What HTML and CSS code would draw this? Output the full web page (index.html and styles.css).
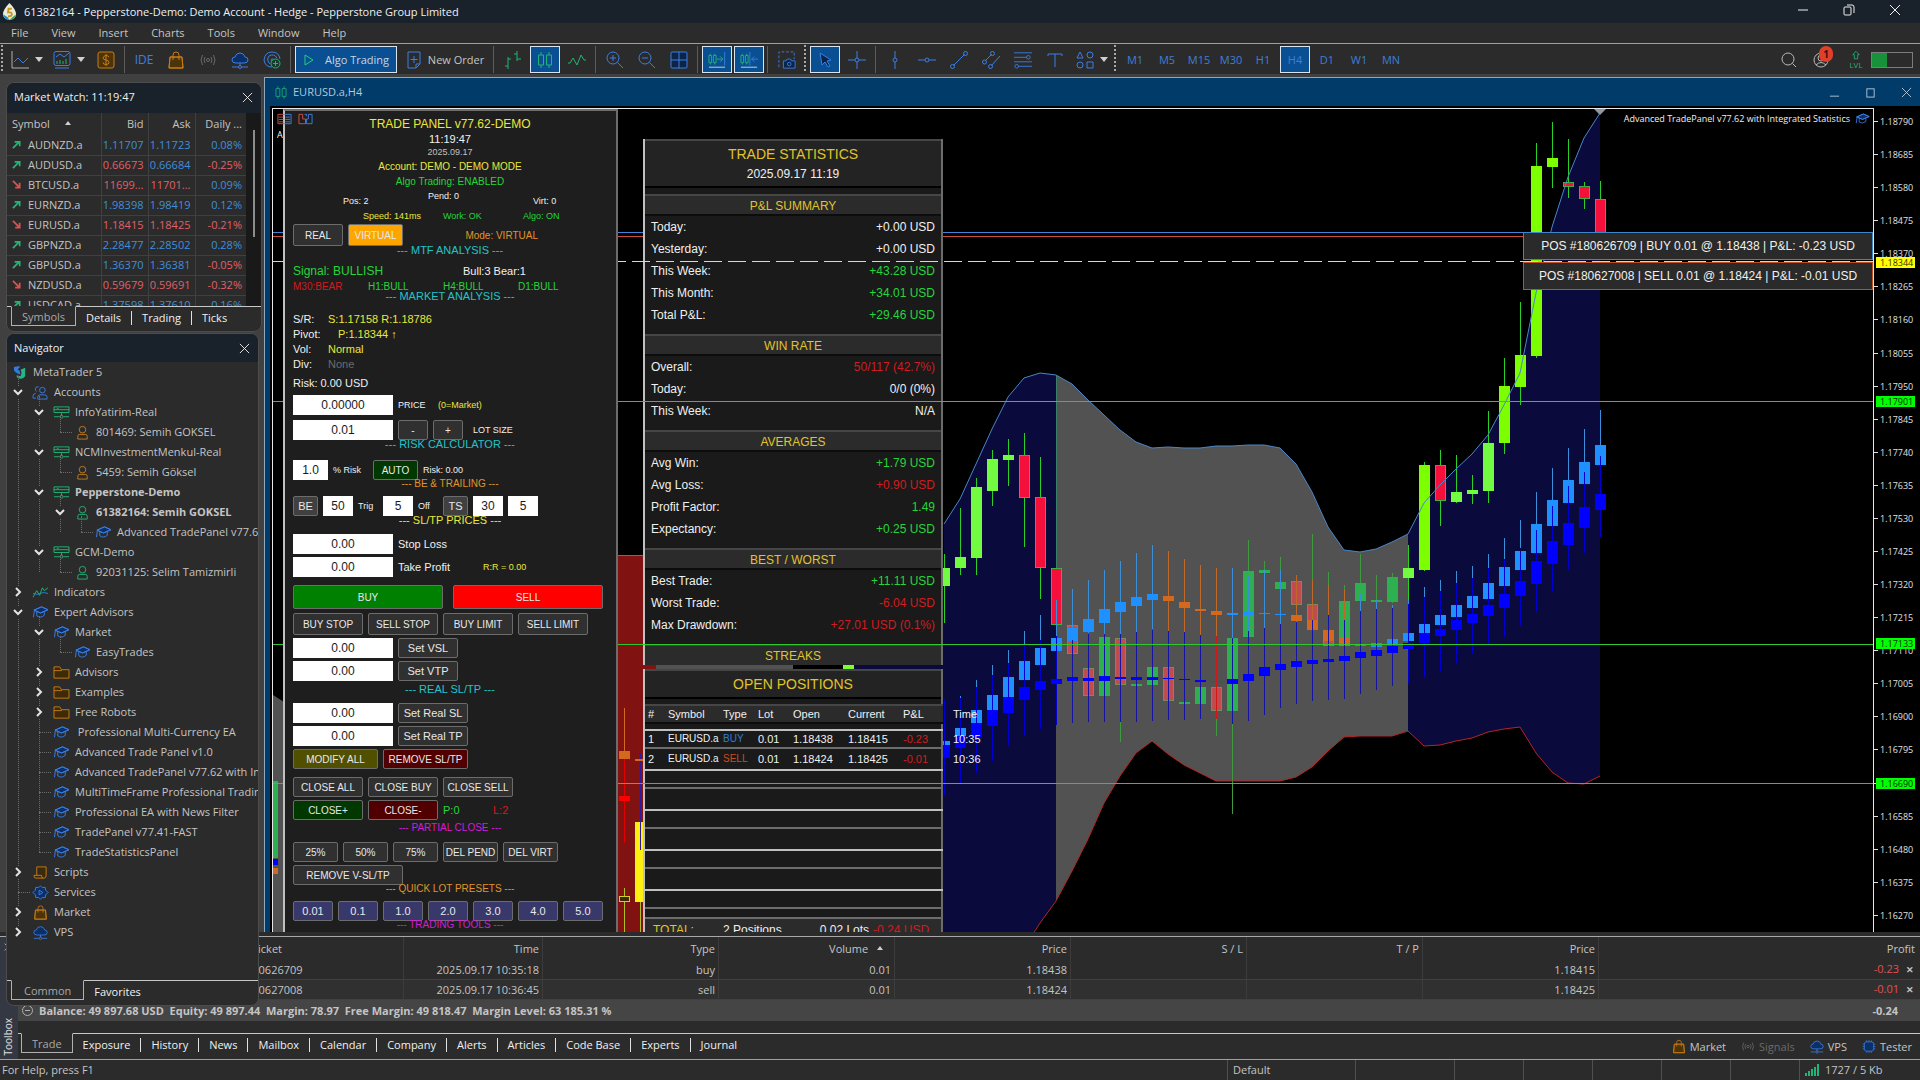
FILE: index.html
```html
<!DOCTYPE html>
<html lang="en">
<head>
  <meta charset="UTF-8" />
  <title>61382164 - Pepperstone-Demo: Demo Account - Hedge - Pepperstone Group Limited</title>
  <link rel="stylesheet" href="styles.css">
</head>
<body>
  <!-- Icon set -->
  <svg class="sprite" aria-hidden="true">
    <symbol id="i-cap" viewBox="0 0 18 16"><path d="M2 5.5L10 2l7 3-8 3.500z" fill="#0b2f66"/><path d="M2 5.500L10 2l7 3-8 3.500zM5 7v4.500q4 3 8-.5V7M2.500 5.500L1.500 13" /></symbol>
    <symbol id="i-folder" viewBox="0 0 18 16"><path d="M1 2h6l2 3h8v9H1zM1 6h8V5" fill="#3d2a08"/></symbol>
    <symbol id="i-user" viewBox="0 0 18 16"><circle cx="9" cy="5" r="3.500"/><path d="M4 15v-3q0-2 2-2h6q2 0 2 2v3z"/></symbol>
    <symbol id="i-users" viewBox="0 0 18 16"><circle cx="11" cy="5.500" r="3"/><path d="M6 15v-2q0-2.500 2.500-2.500h5q2.500 0 2.500 2.500v2zM7 2q-3-1-3.500 2 0 2 1.500 3M4 9q-3 0-3 3v2h3"/></symbol>
    <symbol id="i-server" viewBox="0 0 18 16"><path d="M1 2h16v6H1zM1 5h16M4 3.500h2M9 8v3M1 12.500h6M11 12.500h6"/><circle cx="9" cy="12.500" r="1.500"/></symbol>
    <symbol id="i-wave" viewBox="0 0 18 16"><path d="M1 13l4-7 3 5 3-8 2 3 4-3"/><path d="M1 9l5 1 6-2 5 1" stroke="#2f7de0"/></symbol>
    <symbol id="i-script" viewBox="0 0 18 16"><path d="M5 2h10v9q0 3-2 3H4q-2 0-2-3h8q0 3 2 3M5 2v9" fill="#3d2a08"/></symbol>
    <symbol id="i-gear" viewBox="0 0 18 16"><path d="M9 .8l2 2 3-.3.500 3L17 8l-2.500 2.500-.5 3-3-.3-2 2-2-2-3 .3-.5-3L1 8l2.500-2.500.5-3 3 .3z" fill="#0b2f66"/><path d="M7.500 5.500v5l4-2.500z"/></symbol>
    <symbol id="i-bag" viewBox="0 0 18 18"><path d="M3 6h12l1 11H2z" fill="#4d3408"/><path d="M3 6h12l1 11H2zM6 9V4q0-3 3-3t3 3v5"/></symbol>
    <symbol id="i-cloud" viewBox="0 0 18 18"><path d="M5 12q-4 0-4-3t3-3q1-4 5-4t5 4q3 0 3 3t-4 3z" fill="#0b2f66"/><path d="M9 12v3M1 16h6M11 16h6"/><circle cx="9" cy="16" r="1.500"/></symbol>
    <symbol id="i-signal" viewBox="0 0 18 18"><circle cx="9" cy="9" r="1.500"/><path d="M6 6q-2 3 0 6M12 6q2 3 0 6M3.500 4q-3 5 0 10M14.500 4q3 5 0 10"/></symbol>
    <symbol id="i-chip" viewBox="0 0 18 18"><rect x="3" y="3" width="12" height="12" rx="3" fill="#0b2f66"/><path d="M6 3V1M9 3V1M12 3V1M6 17v-2M9 17v-2M12 17v-2M1 6h2M1 9h2M1 12h2M15 6h2M15 9h2M15 12h2"/></symbol>
    <symbol id="i-line" viewBox="0 0 18 18"><path d="M1 0v17h17" stroke="#b0b0b0"/><path d="M3 11l4-4 5 5 5-5"/></symbol>
    <symbol id="i-template" viewBox="0 0 18 18"><rect x="1" y="0.500" width="16" height="14" rx="2"/><path d="M2 17h14M3 6l4-3 4 3 5-4"/><path d="M4 13v-3M7 13V9M10 13v-3M13 13V8" stroke="#1fb574"/></symbol>
    <symbol id="i-dollar" viewBox="0 0 18 18"><rect x="1" y="1" width="16" height="16" rx="2" fill="#4d3408"/><path d="M12 6q-1-1.500-3-1.500T6 7q0 1.500 3 2t3 2.500q0 2-3 2t-3-2M9 3v12"/></symbol>
    <symbol id="i-radar" viewBox="0 0 18 18"><path d="M9 16q-7 0-8-7 1-8 8-8t8 7M7 13q-4-4-1-8 5-3 8 2M8 10q0-3 2-2"/><circle cx="12.500" cy="12.500" r="4.500" stroke="#1fb574" fill="#173a2c"/><path d="M12.500 10v5M10 12.500h5" stroke="#1fb574"/></symbol>
    <symbol id="i-order" viewBox="0 0 18 18"><path d="M3 1h12v12l-4 4H3zM11 17v-4h4M9 5v7M5.500 8.500h7"/></symbol>
    <symbol id="i-bars" viewBox="0 0 18 18"><path d="M4 6v12M1 15h3M4 8h3M13 0v10M10 3h3M13 8h4"/></symbol>
    <symbol id="i-candles" viewBox="0 0 18 18"><path d="M5 1v3M5 14v3M13 1v3M13 14v3M2.500 4h5v10h-5zM10.500 4h5v10h-5z"/></symbol>
    <symbol id="i-zig" viewBox="0 0 18 18"><path d="M0 12h2l3-5 4 7 4-10 3 5h2"/></symbol>
    <symbol id="i-zin" viewBox="0 0 18 18"><circle cx="7" cy="7" r="6"/><path d="M11.500 11.500L17 17M4 7h6M7 4v6"/></symbol>
    <symbol id="i-zout" viewBox="0 0 18 18"><circle cx="7" cy="7" r="6"/><path d="M11.500 11.500L17 17M4 7h6"/></symbol>
    <symbol id="i-grid" viewBox="0 0 18 18"><rect x="1" y="1" width="16" height="16" rx="1" fill="#0b2447"/><path d="M9 1v16M1 9h16"/></symbol>
    <symbol id="i-shiftr" viewBox="0 0 20 18"><path d="M1 4h3v8H1zM6 4h3v8H6zM2.500 2v2M2.500 12v2M7.500 2v2M7.500 12v2M10 8h6M13.500 5l3 3-3 3" stroke="#1fb574"/><path d="M18.500 0v15"/><path d="M1 17h18" stroke="#c8dcf0"/></symbol>
    <symbol id="i-shiftl" viewBox="0 0 20 18"><path d="M1 4h3v8H1zM6 4h3v8H6zM2.500 2v2M2.500 12v2M7.500 2v2M7.500 12v2" stroke="#1fb574"/><path d="M11 0v15M13 8h7M16 5l-3 3 3 3"/><path d="M1 17h18" stroke="#c8dcf0"/></symbol>
    <symbol id="i-camera" viewBox="0 0 20 20"><path d="M1 18V1h17v8" stroke-dasharray="3 2"/><path d="M6 11h3l1-2h4l1 2h4v8H6z" fill="#0b2447"/><circle cx="12.500" cy="14.500" r="2"/></symbol>
    <symbol id="i-cursor" viewBox="0 0 18 18"><path d="M4 2l11 7-4 1 3 5-2 1-3-5-3 3z" fill="#0b2447"/></symbol>
    <symbol id="i-cross" viewBox="0 0 18 18"><path d="M9 0v7M9 11v7M0 9h7M11 9h7"/><circle cx="9" cy="9" r="2"/></symbol>
    <symbol id="i-vline" viewBox="0 0 18 18"><path d="M9 0v7M9 11v7"/><circle cx="9" cy="9" r="2"/></symbol>
    <symbol id="i-hline" viewBox="0 0 18 18"><path d="M0 9h7M11 9h7"/><circle cx="9" cy="9" r="2"/></symbol>
    <symbol id="i-trend" viewBox="0 0 18 18"><path d="M3.500 14.500l11-11"/><circle cx="2.500" cy="15.500" r="2"/><circle cx="15.500" cy="2.500" r="2"/></symbol>
    <symbol id="i-channel" viewBox="0 0 18 18"><path d="M3.500 9.500l6-6M9.500 14.500L18 5"/><circle cx="2.500" cy="11" r="2"/><circle cx="10.500" cy="2.500" r="2"/><circle cx="8.500" cy="15.500" r="2"/></symbol>
    <symbol id="i-fib" viewBox="0 0 20 18"><path d="M0 1h20M0 6h14M0 11h20M5 16h15"/><circle cx="16" cy="6" r="2"/><circle cx="3" cy="16" r="2"/></symbol>
    <symbol id="i-text" viewBox="0 0 18 18"><path d="M2 5V3h14v2M9 3v13"/></symbol>
    <symbol id="i-shapes" viewBox="0 0 18 18"><path d="M4 1L1 7h6zM11 11h6v6h-6z"/><circle cx="14" cy="4" r="3"/><circle cx="4" cy="14" r="3"/></symbol>
    <symbol id="i-search" viewBox="0 0 18 18"><circle cx="8" cy="8" r="6"/><path d="M12.500 12.500L16 16"/></symbol>
    <symbol id="i-x" viewBox="0 0 12 12"><path d="M1 1l10 10M11 1L1 11"/></symbol>
    <symbol id="i-down" viewBox="0 0 12 12"><path d="M2 4l4 4 4-4"/></symbol>
    <symbol id="i-right" viewBox="0 0 12 12"><path d="M4 2l4 4-4 4"/></symbol>
    <symbol id="i-ne" viewBox="0 0 10 10"><path d="M1 9l7-7M3 2h5.500v5"/></symbol>
    <symbol id="i-se" viewBox="0 0 10 10"><path d="M1 1l7 7M8.500 3v5.500h-5"/></symbol>
    <symbol id="i-mt" viewBox="0 0 16 16"><path d="M1 2l6-1v2q-4 2 0 3l1 4Q1 8 1 5z" fill="#2f7de0" stroke="none"/><path d="M8 5l5-2v9q-4 5-9 1v-2l4 1q2-4 0-7z" fill="#25b58a" stroke="none"/></symbol>
  </svg>

  <div class="app">
    <header class="titlebar">
      <svg class="logo" viewBox="0 0 16 20"><path d="M8 1q7 7 7 12t-7 6q-7-1-7-6T8 1z" fill="#e8ecd8"/><path d="M1 13q1 6 7 6l-2-3z" fill="#2f8fc0"/><path d="M15 13q-1 6-7 6l3-3z" fill="#3fa35a"/><path d="M10.500 7H7l-.5 4q4-.5 4 2t-4 2" fill="none" stroke="#c9961c" stroke-width="2"/></svg>
      <h1>61382164 - Pepperstone-Demo: Demo Account - Hedge - Pepperstone Group Limited</h1>
      <div class="win-btns">
        <button aria-label="Minimize"><svg viewBox="0 0 12 12"><path d="M1 6h10"/></svg></button>
        <button aria-label="Restore"><svg viewBox="0 0 12 12"><rect x="1" y="3" width="7" height="8" rx="1"/><path d="M4 1h5q2 0 2 2v6"/></svg></button>
        <button aria-label="Close"><svg><use href="#i-x"/></svg></button>
      </div>
    </header>

    <nav class="menubar">
      <a href="#">File</a><a href="#">View</a><a href="#">Insert</a><a href="#">Charts</a><a href="#">Tools</a><a href="#">Window</a><a href="#">Help</a>
    </nav>

    <div class="toolbar">
      <span class="handle"></span>
      <button class="tool drop blue" aria-label="Chart type"><svg><use href="#i-line"/></svg><i class="tri"></i></button>
      <button class="tool drop blue" aria-label="Templates"><svg><use href="#i-template"/></svg><i class="tri"></i></button>
      <button class="tool orange" aria-label="Symbols"><svg><use href="#i-dollar"/></svg></button>
      <span class="sep"></span>
      <button class="tool blue ide">IDE</button>
      <button class="tool orange" aria-label="Market"><svg><use href="#i-bag"/></svg></button>
      <button class="tool grey" aria-label="Signals"><svg><use href="#i-signal"/></svg></button>
      <button class="tool blue" aria-label="VPS"><svg><use href="#i-cloud"/></svg></button>
      <button class="tool blue" aria-label="Copy signals"><svg><use href="#i-radar"/></svg></button>
      <span class="sep"></span>
      <button class="tool algo on"><svg class="play" viewBox="0 0 12 12"><path d="M2 1v10l8-5z"/></svg>Algo Trading</button>
      <button class="tool order blue"><svg><use href="#i-order"/></svg><span>New Order</span></button>
      <span class="sep"></span>
      <button class="tool green" aria-label="Bars"><svg><use href="#i-bars"/></svg></button>
      <button class="tool green on" aria-label="Candles"><svg><use href="#i-candles"/></svg></button>
      <button class="tool green" aria-label="Line"><svg><use href="#i-zig"/></svg></button>
      <span class="sep"></span>
      <button class="tool blue" aria-label="Zoom in"><svg><use href="#i-zin"/></svg></button>
      <button class="tool blue" aria-label="Zoom out"><svg><use href="#i-zout"/></svg></button>
      <button class="tool blue" aria-label="Tile windows"><svg><use href="#i-grid"/></svg></button>
      <span class="sep"></span>
      <button class="tool blue on" aria-label="Auto scroll"><svg><use href="#i-shiftr"/></svg></button>
      <button class="tool blue on" aria-label="Chart shift"><svg><use href="#i-shiftl"/></svg></button>
      <span class="sep"></span>
      <button class="tool blue" aria-label="Screenshot"><svg><use href="#i-camera"/></svg></button>
      <span class="handle"></span>
      <button class="tool blue on" aria-label="Cursor"><svg><use href="#i-cursor"/></svg></button>
      <button class="tool blue" aria-label="Crosshair"><svg><use href="#i-cross"/></svg></button>
      <span class="sep"></span>
      <button class="tool blue" aria-label="Vertical line"><svg><use href="#i-vline"/></svg></button>
      <button class="tool blue" aria-label="Horizontal line"><svg><use href="#i-hline"/></svg></button>
      <button class="tool blue" aria-label="Trendline"><svg><use href="#i-trend"/></svg></button>
      <button class="tool blue" aria-label="Channel"><svg><use href="#i-channel"/></svg></button>
      <button class="tool blue" aria-label="Fibonacci"><svg><use href="#i-fib"/></svg></button>
      <button class="tool blue" aria-label="Text"><svg><use href="#i-text"/></svg></button>
      <button class="tool drop blue" aria-label="Objects"><svg><use href="#i-shapes"/></svg><i class="tri"></i></button>
      <span class="handle"></span>
      <button class="tool tf">M1</button><button class="tool tf">M5</button><button class="tool tf">M15</button><button class="tool tf">M30</button><button class="tool tf">H1</button><button class="tool tf on">H4</button><button class="tool tf">D1</button><button class="tool tf">W1</button><button class="tool tf">MN</button>
      <div class="tool-right">
        <button class="tool light" aria-label="Search"><svg><use href="#i-search"/></svg></button>
        <button class="tool light account" aria-label="Account"><svg viewBox="0 0 18 18"><circle cx="9" cy="9" r="7"/><circle cx="9" cy="7" r="3"/><path d="M4 14q5-5 10 0"/></svg><b class="badge">1</b></button>
        <span class="lvl"><svg viewBox="0 0 12 12"><path d="M6 1l4 4H8v5H4V5H2z"/></svg>LVL</span>
        <span class="meter"><i></i></span>
      </div>
    </div>

    <main class="workspace">
      <aside class="sidebar">
        <section class="panel watch">
          <h2>Market Watch: 11:19:47 <button aria-label="Close Market Watch"><svg><use href="#i-x"/></svg></button></h2>
          <div class="watch-body">
            <table>
              <thead><tr><th class="sym">Symbol <i class="up"></i></th><th>Bid</th><th>Ask</th><th class="day">Daily ...</th></tr></thead>
              <tbody id="watchRows"></tbody>
            </table>
            <div class="track"><i></i></div>
          </div>
          <div class="tabs"><a href="#" class="on">Symbols</a><a href="#">Details</a><a href="#">Trading</a><a href="#">Ticks</a></div>
        </section>

        <section class="panel navigator">
          <h2>Navigator <button aria-label="Close Navigator"><svg><use href="#i-x"/></svg></button></h2>
          <div class="tree">
            <div class="node root"><svg class="ico"><use href="#i-mt"/></svg>MetaTrader 5</div>
            <ul id="tree"></ul>
          </div>
          <div class="tabs"><a href="#" class="on">Common</a><a href="#">Favorites</a></div>
        </section>
      </aside>

      <section class="chart-win">
        <header class="chart-title">
          <svg class="green"><use href="#i-candles"/></svg>
          <h2>EURUSD.a,H4</h2>
          <div class="win-btns">
            <button aria-label="Minimize chart"><svg viewBox="0 0 12 12"><path d="M1 10h10"/></svg></button>
            <button aria-label="Maximize chart"><svg viewBox="0 0 12 12"><rect x="2" y="2" width="8" height="9"/></svg></button>
            <button aria-label="Close chart"><svg><use href="#i-x"/></svg></button>
          </div>
        </header>

        <div class="chart-body">
          <div class="plot">
            <svg id="chart" class="layer" viewBox="273 109 1600 823" preserveAspectRatio="none"></svg>
            <svg id="levels" class="layer levels" viewBox="273 109 1600 823" preserveAspectRatio="none"></svg>
            <div class="ea-name">Advanced TradePanel v77.62 with Integrated Statistics <svg class="blue"><use href="#i-cap"/></svg></div>
            <div class="corner">A</div>
            <div class="corner-icons">
              <svg viewBox="0 0 16 12"><path d="M8 1H1v10h7M2 4h5M2 6.500h5M2 9h5" stroke="#d0504a"/><path d="M8 1h7v10H8M9 4h5M9 6.500h5M9 9h5" stroke="#3d7fe0"/></svg>
              <svg viewBox="0 0 16 12"><path d="M1 1h4v5h3v5H1z" stroke="#d0504a"/><path d="M15 1h-4v5H9v5h6zM7 1h2v2" stroke="#3d7fe0"/></svg>
            </div>

            <div class="trade-panel">
              <div class="tp-title yellow">TRADE PANEL v77.62-DEMO</div>
              <div class="tp-time">11:19:47</div>
              <div class="tp-date">2025.09.17</div>
              <div class="tp-line yellow">Account: DEMO - DEMO MODE</div>
              <div class="tp-line lime">Algo Trading: ENABLED</div>
              <div class="row counts"><span class="w80">Pos: 2</span><span class="w100 raised">Pend: 0</span><span>Virt: 0</span></div>
              <div class="row speeds"><span class="w75 yellow">Speed: 141ms</span><span class="w75 lime">Work: OK</span><span class="lime">Algo: ON</span></div>
              <div class="row tall"><button class="w50">REAL</button><button class="w55 amber">VIRTUAL</button><span class="w130 orange-t">Mode: VIRTUAL</span></div>
              <div class="head h16 cyan">--- MTF ANALYSIS ---</div>
              <div class="row signal"><span class="w165 big lime">Signal: BULLISH</span><span>Bull:3 Bear:1</span></div>
              <div class="row frames"><span class="w70 red">M30:BEAR</span><span class="w70 lime">H1:BULL</span><span class="w70 lime">H4:BULL</span><span class="lime">D1:BULL</span></div>
              <div class="head h20 cyan">--- MARKET ANALYSIS ---</div>
              <div class="info"><span>S/R:</span><span class="yellow">S:1.17158 R:1.18786</span></div>
              <div class="info"><span>Pivot:</span><span class="yellow in">P:1.18344 ↑</span></div>
              <div class="info"><span>Vol:</span><span class="yellow">Normal</span></div>
              <div class="info"><span>Div:</span><span class="dim">None</span></div>
              <div class="info risk">Risk: 0.00 USD</div>
              <div class="row"><input id="price" class="w100" value="0.00000"><label for="price" class="w35 tiny">PRICE</label><span class="tiny yellow">(0=Market)</span></div>
              <div class="row gap5"><input id="lot" class="w100" value="0.01"><button class="w30">-</button><button class="w30">+</button><label for="lot" class="tiny lotl">LOT SIZE</label></div>
              <div class="head h20 cyan">--- RISK CALCULATOR ---</div>
              <div class="row"><input id="risk" class="w35" value="1.0"><label for="risk" class="w35 tiny">% Risk</label><button class="w45 auto">AUTO</button><span class="tiny">Risk: 0.00</span></div>
              <div class="head h16 orange-t small">--- BE &amp; TRAILING ---</div>
              <div class="row"><button class="w25 grey-b">BE</button><input id="trig" class="w30" value="50"><label for="trig" class="w20 tiny">Trig</label><input id="off" class="w30" value="5"><label for="off" class="w20 tiny">Off</label><button class="w25 grey-b">TS</button><input aria-label="Trailing start" class="w30" value="30"><input aria-label="Trailing step" class="w30" value="5"></div>
              <div class="head h18 yellow">--- SL/TP PRICES ---</div>
              <div class="row"><input id="sl" class="w100" value="0.00"><label for="sl">Stop Loss</label></div>
              <div class="row gap3"><input id="tp" class="w100" value="0.00"><label for="tp" class="w80">Take Profit</label><span class="tiny yellow">R:R = 0.00</span></div>
              <div class="row big-btns gap8"><button class="buy">BUY</button><button class="sell">SELL</button></div>
              <div class="row tall gap4"><button class="w70">BUY STOP</button><button class="w70">SELL STOP</button><button class="w70">BUY LIMIT</button><button class="w70">SELL LIMIT</button></div>
              <div class="row gap3"><input aria-label="Virtual SL" class="w100" value="0.00"><button class="w60 mixed">Set VSL</button></div>
              <div class="row gap3"><input aria-label="Virtual TP" class="w100" value="0.00"><button class="w60 mixed">Set VTP</button></div>
              <div class="head h22 cyan">--- REAL SL/TP ---</div>
              <div class="row"><input aria-label="Real SL" class="w100" value="0.00"><button class="w70 mixed">Set Real SL</button></div>
              <div class="row gap3"><input aria-label="Real TP" class="w100" value="0.00"><button class="w70 mixed">Set Real TP</button></div>
              <div class="row gap3"><button class="w85 olive">MODIFY ALL</button><button class="w85 maroon">REMOVE SL/TP</button></div>
              <div class="row gap8"><button class="w70">CLOSE ALL</button><button class="w70">CLOSE BUY</button><button class="w70">CLOSE SELL</button></div>
              <div class="row gap3"><button class="w70 auto">CLOSE+</button><button class="w70 maroon">CLOSE-</button><span class="w45 lime">P:0</span><span class="red">L:2</span></div>
              <div class="head h22 magenta small">--- PARTIAL CLOSE ---</div>
              <div class="row"><button class="w45">25%</button><button class="w45">50%</button><button class="w45">75%</button><button class="w55">DEL PEND</button><button class="w55">DEL VIRT</button></div>
              <div class="row gap3"><button class="w110">REMOVE V-SL/TP</button></div>
              <div class="head h16 orange-t small">--- QUICK LOT PRESETS ---</div>
              <div class="row lots"><button>0.01</button><button>0.1</button><button>1.0</button><button>2.0</button><button>3.0</button><button>4.0</button><button>5.0</button></div>
              <div class="head h16 magenta small">--- TRADING TOOLS ---</div>
            </div>

            <div class="stats">
              <div class="stat-box">
                <div class="stat-title">TRADE STATISTICS<small>2025.09.17 11:19</small></div>
                <h3>P&amp;L SUMMARY</h3>
                <dl>
                  <div><dt>Today:</dt><dd>+0.00 USD</dd></div>
                  <div><dt>Yesterday:</dt><dd>+0.00 USD</dd></div>
                  <div><dt>This Week:</dt><dd class="lime">+43.28 USD</dd></div>
                  <div><dt>This Month:</dt><dd class="lime">+34.01 USD</dd></div>
                  <div><dt>Total P&amp;L:</dt><dd class="lime">+29.46 USD</dd></div>
                </dl>
                <h3>WIN RATE</h3>
                <dl>
                  <div><dt>Overall:</dt><dd class="red">50/117 (42.7%)</dd></div>
                  <div><dt>Today:</dt><dd>0/0 (0%)</dd></div>
                  <div><dt>This Week:</dt><dd>N/A</dd></div>
                </dl>
                <h3>AVERAGES</h3>
                <dl>
                  <div><dt>Avg Win:</dt><dd class="lime">+1.79 USD</dd></div>
                  <div><dt>Avg Loss:</dt><dd class="red">+0.90 USD</dd></div>
                  <div><dt>Profit Factor:</dt><dd class="lime">1.49</dd></div>
                  <div><dt>Expectancy:</dt><dd class="lime">+0.25 USD</dd></div>
                </dl>
                <h3>BEST / WORST</h3>
                <dl>
                  <div><dt>Best Trade:</dt><dd class="lime">+11.11 USD</dd></div>
                  <div><dt>Worst Trade:</dt><dd class="red">-6.04 USD</dd></div>
                  <div><dt>Max Drawdown:</dt><dd class="red">+27.01 USD (0.1%)</dd></div>
                </dl>
                <h3 class="last">STREAKS</h3>
              </div>
              <div class="stat-box open">
                <div class="open-title">OPEN POSITIONS</div>
                <table>
                  <colgroup><col class="c23"><col class="c55"><col class="c35"><col class="c35"><col class="c55"><col class="c55"><col class="c40"><col class="c50"></colgroup>
                  <thead><tr><th>#</th><th>Symbol</th><th>Type</th><th>Lot</th><th>Open</th><th>Current</th><th>P&amp;L</th><th>Time</th></tr></thead>
                  <tbody>
                    <tr><td>1</td><td class="sm">EURUSD.a</td><td class="sm azure">BUY</td><td>0.01</td><td>1.18438</td><td>1.18415</td><td class="red">-0.23</td><td>10:35</td></tr>
                    <tr><td>2</td><td class="sm">EURUSD.a</td><td class="sm brick">SELL</td><td>0.01</td><td>1.18424</td><td>1.18425</td><td class="red">-0.01</td><td>10:36</td></tr>
                    <tr><td></td><td></td><td></td><td></td><td></td><td></td><td></td><td></td></tr>
                    <tr><td></td><td></td><td></td><td></td><td></td><td></td><td></td><td></td></tr>
                    <tr><td></td><td></td><td></td><td></td><td></td><td></td><td></td><td></td></tr>
                    <tr><td></td><td></td><td></td><td></td><td></td><td></td><td></td><td></td></tr>
                    <tr><td></td><td></td><td></td><td></td><td></td><td></td><td></td><td></td></tr>
                    <tr><td></td><td></td><td></td><td></td><td></td><td></td><td></td><td></td></tr>
                    <tr><td></td><td></td><td></td><td></td><td></td><td></td><td></td><td></td></tr>
                  </tbody>
                </table>
                <div class="open-total"><span class="gold">TOTAL:</span><span>2 Positions</span><span class="lots-sum">0.02 Lots</span><span class="red">-0.24 USD</span></div>
              </div>
            </div>

            <div class="pos-list">
              <div class="pos buy-pos">POS #180626709 | BUY 0.01 @ 1.18438 | P&amp;L: -0.23 USD</div>
              <div class="pos sell-pos">POS #180627008 | SELL 0.01 @ 1.18424 | P&amp;L: -0.01 USD</div>
            </div>
          </div>
          <div class="scale" id="scale"></div>
        </div>
      </section>

      <section class="toolbox">
        <div class="tb-side"><svg><use href="#i-x"/></svg><span>Toolbox</span></div>
        <div class="tb-main">
          <table>
            <colgroup><col class="t-a"><col class="t-b"><col class="t-c"><col class="t-d"><col class="t-d"><col class="t-d"><col class="t-d"><col class="t-d"><col class="t-d"><col></colgroup>
            <thead><tr><th></th><th class="l">Ticket</th><th>Time</th><th>Type</th><th class="vol">Volume <i class="up"></i></th><th>Price</th><th>S / L</th><th>T / P</th><th>Price</th><th class="pl">Profit</th></tr></thead>
            <tbody>
              <tr><td></td><td class="l">180626709</td><td>2025.09.17 10:35:18</td><td>buy</td><td>0.01</td><td>1.18438</td><td></td><td></td><td>1.18415</td><td class="pl"><span class="loss">-0.23</span><button aria-label="Close position">✕</button></td></tr>
              <tr class="alt"><td></td><td class="l">180627008</td><td>2025.09.17 10:36:45</td><td>sell</td><td>0.01</td><td>1.18424</td><td></td><td></td><td>1.18425</td><td class="pl"><span class="loss">-0.01</span><button aria-label="Close position">✕</button></td></tr>
            </tbody>
          </table>
          <div class="balance"><span class="minus"></span><b>Balance: 49 897.68 USD&nbsp; Equity: 49 897.44&nbsp; Margin: 78.97&nbsp; Free Margin: 49 818.47&nbsp; Margin Level: 63 185.31 %</b><b class="sum">-0.24</b></div>
          <div class="tb-tabs">
            <div class="tabs"><a href="#" class="on">Trade</a><a href="#">Exposure</a><a href="#">History</a><a href="#">News</a><a href="#">Mailbox</a><a href="#">Calendar</a><a href="#">Company</a><a href="#">Alerts</a><a href="#">Articles</a><a href="#">Code Base</a><a href="#">Experts</a><a href="#">Journal</a></div>
            <div class="links">
              <a href="#"><svg class="orange"><use href="#i-bag"/></svg>Market</a>
              <a href="#" class="off"><svg class="grey"><use href="#i-signal"/></svg>Signals</a>
              <a href="#"><svg class="blue"><use href="#i-cloud"/></svg>VPS</a>
              <a href="#"><svg class="blue"><use href="#i-chip"/></svg>Tester</a>
            </div>
          </div>
        </div>
      </section>
    </main>

    <footer class="status">
      <span class="help">For Help, press F1</span>
      <span class="s1">Default</span><span class="s2"></span><span class="s3"></span><span class="s3"></span><span class="s3"></span><span class="s3"></span><span class="s3"></span>
      <span class="net"><svg viewBox="0 0 14 12"><path d="M1 12V9M4 12V7M7 12V5M10 12V3M13 12V0"/></svg>1727 / 5 Kb</span>
    </footer>
  </div>
  <script src="script.js"></script>
</body>
</html>
```
FILE: styles.css
```css
* {
  box-sizing: border-box;
}
body {
  margin: 0;
  background: #404040;
  color: #c4c4c4;
  font-family: "Open Sans", "Noto Sans", sans-serif;
  font-size: 11px;
  line-height: 16px;
}
h1, h2, h3, dl, dd, ul {
  margin: 0;
  padding: 0;
  font-size: inherit;
  font-weight: normal;
}
a {
  color: inherit;
  text-decoration: none;
}
button, input {
  font: inherit;
  color: inherit;
  margin: 0;
  padding: 0;
  border: 0;
  background: none;
}
table {
  border-collapse: collapse;
  table-layout: fixed;
}
th {
  font-weight: normal;
}
svg {
  width: 18px;
  height: 18px;
  fill: none;
  stroke: currentColor;
  flex: none;
}
.sprite {
  position: absolute;
  width: 0;
  height: 0;
}

/* Shared colours */
.blue { color: #3b7ee6; }
.green { color: #1fb574; }
.orange { color: #c87c14; }
.grey { color: #6a6a6a; }
.light { color: #b8b8b8; }
.yellow { color: #e8e83c; }
.lime { color: #25d53a; }
.red { color: #d01c20; }
.cyan { color: #22c4c8; }
.magenta { color: #d41cd4; }
.orange-t { color: #e0942a; }
.gold { color: #e0c42a; }
.azure { color: #2a7fd0; }
.brick { color: #d04a20; }
.dim { color: #6c6c6c; }

.app {
  display: flex;
  flex-direction: column;
  height: 100vh;
}

/* Title and menu */
.titlebar {
  display: flex;
  align-items: center;
  height: 23px;
  padding: 0 2px;
  background: #19212a;
  color: #f0f0f0;
}
.logo {
  width: 15px;
  height: 19px;
  margin-right: 7px;
  stroke: none;
}
.win-btns {
  display: flex;
  margin-left: auto;
}
.win-btns button {
  width: 46px;
  height: 20px;
}
.win-btns svg {
  width: 12px;
  height: 12px;
}
.menubar {
  display: flex;
  gap: 23px;
  height: 20px;
  padding: 2px 11px;
  background: #2b2b2b;
}

/* Toolbar */
.toolbar {
  display: flex;
  gap: 2px;
  height: 31px;
  padding: 2px 7px 1px 1px;
  border-top: 1px solid #a0a0a0;
  background: #2b2b2b;
}
.tool {
  display: flex;
  align-items: center;
  justify-content: center;
  width: 30px;
  flex: none;
  border: 1px solid transparent;
}
.tool.on {
  background: #0a4f92;
  border-color: #d8e4f0;
}
.tool.drop {
  width: 40px;
  gap: 6px;
}
.handle {
  width: 2px;
  margin: -1px 2px 0 0;
  background: repeating-linear-gradient(#a8a8a8 0 2px, transparent 2px 4px);
}
.sep {
  width: 1px;
  margin: 0 2px 0 1px;
  background: #5c5c5c;
}
.tri {
  border: 4px solid transparent;
  border-top: 5px solid #d0d0d0;
  border-bottom: 0;
}
.up {
  display: inline-block;
  margin: 0 4px 3px 12px;
  border: 3px solid transparent;
  border-bottom: 4px solid #d0d0d0;
  border-top: 0;
}
.ide {
  font-size: 12px;
}
.algo {
  width: 102px;
  gap: 10px;
  color: #c8d4e0;
}
.algo .play {
  width: 12px;
  height: 14px;
  color: #1fd080;
}
.order {
  width: 91px;
  gap: 5px;
}
.order span {
  color: #c4c4c4;
}
.tf {
  color: #3d7fd8;
}
.tool-right {
  display: flex;
  align-items: center;
  gap: 2px;
  margin-left: auto;
}
.account {
  position: relative;
}
.badge {
  position: absolute;
  top: -5px;
  right: 2px;
  width: 14px;
  height: 16px;
  border-radius: 8px;
  background: #e0402a;
  color: #401008;
  font-size: 10px;
}
.lvl {
  display: flex;
  flex-direction: column;
  align-items: center;
  width: 26px;
  margin-left: 5px;
  color: #1fb574;
  font-size: 8px;
  line-height: 8px;
}
.lvl svg {
  width: 10px;
  height: 11px;
}
.meter {
  width: 42px;
  height: 16px;
  border: 1px solid #7c7c7c;
}
.meter i {
  display: block;
  width: 15px;
  height: 100%;
  background: #17913a;
}

/* Workspace */
.workspace {
  display: grid;
  flex: 1;
  min-height: 0;
  grid-template-columns: 264px minmax(0, 1fr);
  grid-template-rows: minmax(0, 1fr) auto;
}
.sidebar {
  grid-column: 1;
  grid-row: 1 / 3;
  z-index: 5;
  display: flex;
  flex-direction: column;
  gap: 1px;
  min-height: 0;
  padding: 8px 2px 0 6px;
  margin-bottom: 53px;
}
.panel {
  display: flex;
  flex-direction: column;
  overflow: hidden;
  border: 1px solid #4c4c4c;
  border-radius: 8px;
  background: #2b2b2b;
}
.panel h2 {
  display: flex;
  align-items: center;
  justify-content: space-between;
  height: 30px;
  padding: 0 8px 2px 7px;
  background: #19212a;
  color: #f0f0f0;
  flex: none;
}
.panel h2 svg {
  width: 11px;
  height: 11px;
  display: block;
}
.watch {
  height: 250px;
  flex: none;
}
.watch-body {
  display: flex;
  flex: 1;
  min-height: 0;
  overflow: hidden;
}
.watch table {
  flex: 1;
}
.watch th, .watch td {
  width: 47px;
  height: 20px;
  padding: 0 4px 0 0;
  text-align: right;
  white-space: nowrap;
  border-left: 1px solid #404040;
}
.watch th {
  height: 22px;
}
.watch td {
  border-bottom: 1px solid #404040;
  color: #3f8fdc;
}
.watch th.sym, .watch td.sym {
  width: 94px;
  padding-left: 5px;
  border-left: 0;
  text-align: left;
  color: #c4c4c4;
}
.watch th.day, .watch td.day {
  width: 51px;
}
.watch td.dn {
  color: #e06068;
}
.watch td svg {
  width: 9px;
  height: 9px;
  margin-right: 7px;
  stroke-width: 2;
}
.watch .s-dn svg { color: #e05050; }
.watch .s-up svg { color: #1fb574; }
.track {
  width: 15px;
  padding: 17px 5px 0 7px;
  background: #191919;
}
.track i {
  display: block;
  width: 2px;
  height: 107px;
  background: #8c8c8c;
}
.tabs {
  display: flex;
  height: 25px;
  padding-left: 4px;
  border-top: 1px solid #c8c8c8;
  color: #f0f0f0;
  flex: none;
}
.tabs a {
  height: 14px;
  margin-top: 4px;
  padding: 0 10px;
  line-height: 13px;
  border-left: 1px solid #e0e0e0;
}
.tabs a.on {
  height: 20px;
  margin-top: -1px;
  line-height: 20px;
  border: 1px solid #b0b0b0;
  border-top-color: #2b2b2b;
  color: #a8a8a8;
}
.tabs a.on + a {
  border-left: 0;
}
.navigator {
  flex: 1;
  margin-right: 3px;
  min-height: 0;
}
.navigator h2 {
  height: 28px;
  padding-bottom: 0;
}
.navigator .tabs a.on {
  padding: 0 12px;
}
.tree {
  flex: 1;
  min-height: 0;
  overflow: hidden;
}
.tree li {
  list-style: none;
}
.tree ul {
  position: relative;
}
.tree ul::before {
  content: "";
  position: absolute;
  top: -6px;
  bottom: 10px;
  left: 11px;
  border-left: 1px dotted #6c6c6c;
}
.tree ul ul {
  margin-left: 21px;
}
.node {
  position: relative;
  display: flex;
  align-items: center;
  height: 20px;
  padding-left: 5px;
  white-space: nowrap;
}
.node .chev {
  width: 12px;
  height: 12px;
  margin-right: 8px;
  background: #2b2b2b;
  color: #e4e4e4;
  stroke-width: 2;
}
.node .leaf {
  flex: none;
  width: 12px;
  margin: 0 2px 0 6px;
  border-top: 1px dotted #6c6c6c;
}
.node .ico {
  width: 17px;
  height: 15px;
  margin-right: 5px;
}
.node.root .ico {
  margin-right: 4px;
}
.node.bold {
  font-weight: bold;
}

/* Chart window */
.chart-win {
  grid-column: 2;
  grid-row: 1;
  display: flex;
  flex-direction: column;
  min-height: 0;
  margin-top: 3px;
  padding-left: 5px;
  border-left: 1px solid #8fa8bc;
  border-top: 1px solid #8fa8bc;
  background: #003b69;
}
.chart-title {
  display: flex;
  align-items: center;
  height: 28px;
  padding-left: 4px;
  color: #b4c8d8;
}
.chart-title > svg {
  width: 14px;
  height: 15px;
  margin-right: 5px;
}
.chart-title .win-btns {
  gap: 8px;
}
.chart-title .win-btns button {
  width: 28px;
  padding-top: 3px;
}
.chart-title .win-btns svg {
  width: 11px;
  height: 11px;
}
.chart-body {
  display: flex;
  flex: 1;
  min-height: 0;
  padding: 2px 0 0 2px;
  background: #000;
}
.plot {
  position: relative;
  flex: 1;
  overflow: hidden;
  border: 1px solid #e8e8e8;
  border-bottom: 0;
  color: #f0f0f0;
}
.layer {
  position: absolute;
  inset: 0;
  width: 100%;
  height: 100%;
  stroke: none;
}
.levels {
  z-index: 2;
  pointer-events: none;
  shape-rendering: crispEdges;
}
.ea-name {
  position: absolute;
  top: 2px;
  right: 3px;
  display: flex;
  align-items: center;
  gap: 5px;
  font-size: 9px;
}
.ea-name svg {
  width: 15px;
  height: 14px;
}
.corner {
  position: absolute;
  top: 18px;
  left: 4px;
  font-size: 9px;
}
.corner-icons {
  position: absolute;
  z-index: 4;
  top: 4px;
  left: 4px;
  display: flex;
  gap: 6px;
}
.corner-icons svg {
  width: 15px;
  height: 12px;
}
.scale {
  position: relative;
  display: flex;
  flex-direction: column;
  justify-content: space-between;
  width: 46px;
  padding: 6px 0 8px;
  color: #e0e0e0;
  font-size: 9px;
}
.scale span::before {
  content: "";
  display: inline-block;
  width: 4px;
  margin-right: 2px;
  border-top: 1px solid #e0e0e0;
  vertical-align: 3px;
}
.scale b {
  position: absolute;
  left: 2px;
  width: 39px;
  padding-left: 4px;
  margin-top: -5px;
  line-height: 11px;
  font-weight: normal;
  background: #0f0;
  color: #043004;
}
.scale b.now {
  background: #ff0;
  color: #303000;
}

/* Trade panel */
.trade-panel {
  position: absolute;
  z-index: 3;
  top: 0;
  left: 10px;
  width: 335px;
  height: 100%;
  padding: 5px 0 0 8px;
  overflow: hidden;
  border: 2px solid #6c6c6c;
  border-left-color: #c0c0c0;
  border-bottom: 0;
  background: #1e1e1e;
  font-family: "Liberation Sans", Arial, sans-serif;
  font-size: 11px;
  line-height: 15px;
  white-space: nowrap;
}
.tp-title, .tp-time, .tp-date, .tp-line, .head {
  width: 314px;
  text-align: center;
}
.tp-title {
  font-size: 12px;
  line-height: 16px;
}
.tp-time {
  height: 14px;
  line-height: 14px;
}
.tp-date {
  height: 13px;
  line-height: 13px;
  font-size: 9px;
  color: #c0c0c0;
}
.tp-line {
  font-size: 10px;
}
.row {
  display: flex;
  align-items: center;
  gap: 5px;
  height: 20px;
}
.row > * {
  flex: none;
  height: 100%;
}
.row > span, .row > label {
  height: auto;
}
.row.counts {
  padding: 5px 0 0 50px;
  font-size: 9px;
}
.row.speeds {
  height: 14px;
  padding-left: 70px;
  margin-bottom: 1px;
  font-size: 9px;
}
.raised {
  padding-bottom: 10px;
}
.row.tall { height: 22px; }
.row.signal { height: 18px; }
.row.frames { height: 12px; font-size: 10px; }
.row.big-btns { height: 24px; gap: 10px; }
.row.gap3 { margin-top: 3px; }
.row.gap4 { margin-top: 4px; }
.row.gap5 { margin-top: 5px; }
.row.gap8 { margin-top: 8px; }
.row input {
  background: #fff;
  color: #1a1a1a;
  text-align: center;
  font-size: 12px;
}
.row button {
  border: 1px solid #6c6c6c;
  border-radius: 2px;
  background: #303030;
  color: #e8e8e8;
  font-size: 10px;
}
.row button.mixed { font-size: 11px; }
.row button.amber { background: #ffa500; }
.row button.auto { background: #003800; }
.row button.grey-b { background: #404040; font-size: 11px; }
.row button.olive { background: #505000; }
.row button.maroon { background: #500000; }
.row button.buy, .row button.sell {
  width: 150px;
  background: #008000;
}
.row button.sell { background: #f00; }
.row.lots button {
  width: 40px;
  background: #38386a;
  font-size: 11px;
}
.row .big { font-size: 12px; }
.row .tiny { font-size: 9px; }
.row .lotl { padding-left: 5px; }
.w20 { width: 20px; }
.w25 { width: 25px; }
.w30 { width: 30px; }
.w35 { width: 35px; }
.w45 { width: 45px; }
.w50 { width: 50px; }
.w55 { width: 55px; }
.w60 { width: 60px; }
.w70 { width: 70px; }
.w75 { width: 75px; }
.w80 { width: 80px; }
.w85 { width: 85px; }
.w100 { width: 100px; }
.w110 { width: 110px; }
.w130 { width: 130px; text-align: right; font-size: 10px; }
.w165 { width: 165px; }
.head {
  position: relative;
  font-size: 11px;
  line-height: 8px;
}
.head.small { font-size: 10px; }
.head.h16 { height: 16px; }
.head.h18 { height: 18px; }
.head.h20 { height: 20px; }
.head.h22 { height: 22px; line-height: 16px; }
.info {
  display: flex;
}
.info span:first-child {
  width: 35px;
}
.info .in {
  padding-left: 10px;
}
.info.risk {
  line-height: 23px;
}

/* Statistics */
.stats {
  position: absolute;
  z-index: 1;
  top: 30px;
  left: 370px;
  width: 300px;
  display: flex;
  flex-direction: column;
  gap: 4px;
  font-family: "Liberation Sans", Arial, sans-serif;
  font-size: 12px;
}
.stat-box {
  border-left: 2px solid #c0c0c0;
  border-right: 2px solid #6c6c6c;
  background: #1a1a1a;
}
.stat-title, .open-title {
  height: 49px;
  padding-top: 5px;
  margin-bottom: 6px;
  border-top: 2px solid #464646;
  border-bottom: 2px solid #000;
  background: #232323;
  color: #e0c42a;
  font-size: 14px;
  text-align: center;
}
.stat-title small {
  display: block;
  margin-top: 4px;
  color: #f0f0f0;
  font-size: 12px;
}
.open-title {
  height: 30px;
  margin-bottom: 5px;
}
.stat-box h3 {
  height: 22px;
  border-top: 2px solid #464646;
  border-bottom: 2px solid #0c0c0c;
  background: #2b2b2b;
  color: #e0c42a;
  line-height: 20px;
  text-align: center;
}
.stat-box h3.last {
  height: 21px;
  border-bottom: 0;
}
.stat-box dl {
  padding: 0 6px 8px;
}
.stat-box dl div {
  display: flex;
  justify-content: space-between;
  line-height: 22px;
}
.open table {
  width: 348px;
  border-collapse: separate;
  border-spacing: 0;
  font-size: 11px;
}
.c23 { width: 23px; }
.c35 { width: 35px; }
.c40 { width: 40px; }
.c50 { width: 50px; }
.c55 { width: 55px; }
.open th, .open td {
  padding: 0;
  height: 20px;
  text-align: left;
  line-height: 14px;
}
.open th:first-child, .open td:first-child {
  padding-left: 3px;
}
.open th:last-child, .open td:last-child {
  padding-left: 10px;
}
.open th:not(:last-child) {
  background: #2b2b2b;
  border-top: 2px solid #464646;
  border-bottom: 2px solid #0c0c0c;
}
.open tbody::before {
  content: "";
  display: block;
  height: 5px;
}
.open tbody tr:nth-child(odd) td:not(:last-child) {
  border-top: 2px solid #c0c0c0;
  border-bottom: 2px solid #6c6c6c;
}
.open .sm {
  font-size: 10px;
}
.open-total {
  display: flex;
  gap: 4px;
  height: 24px;
  margin-top: 8px;
  padding: 3px 0 0 8px;
  border-top: 2px solid #6c6c6c;
  background: #2b2b2b;
}
.open-total .gold {
  width: 66px;
}
.open-total .lots-sum {
  margin-left: 34px;
}

/* Position labels */
.pos-list {
  position: absolute;
  z-index: 1;
  top: 123px;
  right: 0;
  width: 350px;
  display: flex;
  flex-direction: column;
  gap: 2px;
  font-family: "Liberation Sans", Arial, sans-serif;
  font-size: 12px;
}
.pos {
  height: 28px;
  border: 1px solid #3f86c8;
  background: #2a2a2a;
  line-height: 26px;
  text-align: center;
}
.sell-pos {
  border-color: #c0501e;
}

/* Toolbox */
.toolbox {
  grid-column: 1 / 3;
  grid-row: 2;
  display: flex;
  padding-top: 4px;
  background: #2b2b2b;
}
.tb-side {
  display: flex;
  flex-direction: column;
  justify-content: space-between;
  align-items: center;
  width: 18px;
  padding: 6px 3px 4px 0;
  border-top: 1px solid #a8a8a8;
  background: #333842;
  color: #e0e0e0;
}
.tb-side svg {
  width: 8px;
  height: 8px;
}
.tb-side span {
  writing-mode: vertical-rl;
  transform: rotate(180deg);
  font-size: 10px;
}
.tb-main {
  flex: 1;
  min-width: 0;
  border-top: 1px solid #a8a8a8;
}
.tb-main table {
  width: 100%;
  border-collapse: separate;
  border-spacing: 0;
}
.t-a { width: 228px; }
.t-b { width: 158px; }
.t-c { width: 139px; }
.t-d { width: 176px; }
.tb-main th, .tb-main td {
  height: 20px;
  padding: 0 3px 0 0;
  text-align: right;
  border-right: 1px solid #3c3c3c;
  white-space: nowrap;
}
.tb-main th {
  height: 23px;
}
.tb-main th.l, .tb-main td.l {
  text-align: left;
}
.tb-main th.l {
  padding-left: 6px;
}
.tb-main td {
  border-bottom: 1px solid #404040;
}
.tb-main .pl {
  padding-right: 5px;
  border-right: 0;
}
.tb-main .vol {
  padding-right: 7px;
}
.vol .up {
  margin-left: 6px;
}
.alt {
  background: #303030;
}
.loss {
  color: #e05050;
}
.pl button {
  width: 10px;
  margin-left: 6px;
  font-size: 9px;
  font-weight: bold;
}
.balance {
  display: flex;
  align-items: center;
  height: 21px;
  padding: 0 22px 0 4px;
  background: #454545;
}
.minus {
  width: 11px;
  height: 11px;
  margin-right: 6px;
  border: 1px solid #b0b0b0;
  border-radius: 6px;
  background: linear-gradient(#b0b0b0, #b0b0b0) center / 5px 1px no-repeat;
}
.balance .sum {
  margin-left: auto;
}
.tb-tabs {
  display: flex;
  justify-content: space-between;
  margin-top: 12px;
  border-top: 1px solid #c8c8c8;
}
.tb-tabs .tabs {
  padding-left: 3px;
  border: 0;
}
.links {
  display: flex;
  align-items: center;
  gap: 15px;
  padding-right: 8px;
}
.links a {
  display: flex;
  align-items: center;
  gap: 4px;
}
.links svg {
  width: 14px;
  height: 15px;
}
.off {
  color: #6a6a6a;
}

/* Status bar */
.status {
  display: flex;
  height: 21px;
  border-top: 1px solid #a0a0a0;
  background: #2b2b2b;
  line-height: 20px;
}
.status span {
  border-left: 1px solid #505050;
  padding-left: 5px;
}
.status .help {
  flex: 1;
  padding-left: 2px;
  border: 0;
}
.s1 { width: 128px; }
.s2 { width: 99px; }
.s3 { width: 69px; }
.status .net {
  display: flex;
  align-items: center;
  gap: 6px;
  width: 121px;
}
.net svg {
  width: 14px;
  height: 12px;
  color: #1fb574;
  stroke-width: 2;
}
```
FILE: script.js
```js
// Market watch: symbol, bid, ask, daily, direction, colours (u/d) of the three numbers
const quotes = [
  ['AUDNZD.a', '1.11707', '1.11723', '0.08%', 'up', 'uuu'],
  ['AUDUSD.a', '0.66673', '0.66684', '-0.25%', 'up', 'dud'],
  ['BTCUSD.a', '11699...', '11701...', '0.09%', 'dn', 'ddu'],
  ['EURNZD.a', '1.98398', '1.98419', '0.12%', 'up', 'uuu'],
  ['EURUSD.a', '1.18415', '1.18425', '-0.21%', 'dn', 'ddd'],
  ['GBPNZD.a', '2.28477', '2.28502', '0.28%', 'up', 'uuu'],
  ['GBPUSD.a', '1.36370', '1.36381', '-0.05%', 'up', 'uud'],
  ['NZDUSD.a', '0.59679', '0.59691', '-0.32%', 'dn', 'ddd'],
  ['USDCAD.a', '1.37598', '1.37610', '0.16%', 'up', 'uuu']
];
document.getElementById('watchRows').innerHTML = quotes.map(q => {
  const cls = i => (q[5][i] === 'd' ? 'dn' : '');
  return `<tr><td class="sym s-${q[4]}"><svg><use href="#i-${q[4] === 'up' ? 'ne' : 'se'}"/></svg>${q[0]}</td>
    <td class="${cls(0)}">${q[1]}</td><td class="${cls(1)}">${q[2]}</td><td class="day ${cls(2)}">${q[3]}</td></tr>`;
}).join('');

// Navigator tree: [state, icon, colour, text, children, bold]
const cap = (t, kids, state) => [state || '', 'cap', 'blue', t, kids];
const nodes = [
  ['down', 'users', 'blue', 'Accounts', [
    ['down', 'server', 'green', 'InfoYatirim-Real', [['', 'user', 'orange', '801469: Semih GOKSEL']]],
    ['down', 'server', 'green', 'NCMInvestmentMenkul-Real', [['', 'user', 'orange', '5459: Semih Göksel']]],
    ['down', 'server', 'green', 'Pepperstone-Demo', [
      ['down', 'user', 'green', '61382164: Semih GOKSEL', [cap('Advanced TradePanel v77.62')], true]
    ], true],
    ['down', 'server', 'green', 'GCM-Demo', [['', 'user', 'green', '92031125: Selim Tamizmirli']]]
  ]],
  ['right', 'wave', 'green', 'Indicators'],
  cap('Expert Advisors', [
    cap('Market', [cap('EasyTrades')], 'down'),
    ['right', 'folder', 'orange', 'Advisors'],
    ['right', 'folder', 'orange', 'Examples'],
    ['right', 'folder', 'orange', 'Free Robots'],
    cap('&nbsp;Professional Multi-Currency EA'),
    cap('Advanced Trade Panel v1.0'),
    cap('Advanced TradePanel v77.62 with Integrated'),
    cap('MultiTimeFrame Professional Trading'),
    cap('Professional EA with News Filter'),
    cap('TradePanel v77.41-FAST'),
    cap('TradeStatisticsPanel')
  ], 'down'),
  ['right', 'script', 'orange', 'Scripts'],
  ['', 'gear', 'blue', 'Services'],
  ['right', 'bag', 'orange', 'Market'],
  ['right', 'cloud', 'blue', 'VPS']
];
function branch(list) {
  return list.map(([state, icon, color, text, kids, bold]) => `<li><div class="node${bold ? ' bold' : ''}">
    ${state ? `<svg class="chev"><use href="#i-${state}"/></svg>` : '<span class="leaf"></span>'}
    <svg class="ico ${color}"><use href="#i-${icon}"/></svg>${text}</div>${kids ? `<ul>${branch(kids)}</ul>` : ''}</li>`).join('');
}
document.getElementById('tree').innerHTML = branch(nodes);

// Price scale
let labels = '';
for (let i = 0; i < 25; i++) labels += `<span>${(1.1879 - i * 0.00105).toFixed(5)}</span>`;
[[1.18344, 'now'], [1.17901, ''], [1.17133, ''], [1.1669, '']].forEach(([p, c]) => {
  const top = (13 + (1.1879 - p) / 0.00105 * 33.08) / 824 * 100;
  labels += `<b class="${c}" style="top:${top.toFixed(2)}%">${p.toFixed(5)}</b>`;
});
document.getElementById('scale').innerHTML = labels;

// Chart
const X0 = 944, STEP = 16;
const rect = (x, y, w, h, f, extra = '') => `<rect x="${x}" y="${y}" width="${w}" height="${h}" fill="${f}" ${extra}/>`;
const vline = (x, y1, y2, c) => rect(x, y1, 1, y2 - y1, c);

const upper = [524, 499, 464, 429, 397, 378, 373, 375, 384, 400, 415, 430, 442, 448, 447, 448, 448, 446, 446, 445, 445,
  448, 464, 492, 527, 550, 552, 549, 542, 534, 503, 485, 469, 454, 435, 405, 373, 293, 227, 177, 138, 113];
const lower = [1050, 1030, 1010, 990, 970, 948, 923, 901, 871, 839, 803, 776, 753, 741, 754, 765, 773, 781, 781, 781, 781,
  781, 777, 767, 751, 737, 736, 736, 736, 731, 746, 745, 741, 738, 732, 729, 727, 753, 772, 783, 784, 776];
const pts = (arr, from, to) => arr.slice(from, to + 1).map((y, i) => `${X0 + (from + i) * STEP},${y}`);
const band = (from, to, fill) =>
  `<polygon points="${pts(upper, from, to).concat(pts(lower, from, to).reverse()).join(' ')}" fill="${fill}"/>`;

// high, body top, body bottom, low, up/down
const candles = [
  [554, 568, 586, 623, 1], [508, 557, 568, 575, 1], [478, 487, 558, 575, 1], [450, 459, 491, 506, 1], [439, 455, 460, 486, 1],
  [433, 455, 498, 547, 0], [457, 497, 568, 599, 0], [376, 568, 625, 640, 0], [620, 625, 654, 655, 0], [660, 668, 696, 700, 0],
  [630, 637, 696, 696, 1], [632, 638, 685, 742, 0], [680, 684, 686, 700, 1], [660, 667, 685, 690, 1], [664, 667, 701, 702, 0],
  [700, 702, 704, 708, 1], [684, 687, 704, 705, 1], [680, 687, 711, 736, 0], [630, 638, 711, 814, 1], [540, 571, 637, 638, 1],
  [561, 570, 573, 590, 1], [557, 582, 589, 606, 1], [575, 581, 605, 610, 0], [534, 604, 630, 631, 0], [572, 630, 646, 647, 0],
  [585, 601, 646, 647, 1], [554, 583, 601, 610, 1], [575, 600, 602, 610, 1], [573, 577, 602, 603, 1], [545, 568, 578, 604, 1],
  [462, 465, 570, 571, 1], [450, 465, 501, 526, 0], [455, 492, 502, 503, 1], [475, 490, 494, 504, 1], [411, 443, 491, 503, 1],
  [358, 386, 443, 454, 1], [302, 355, 387, 405, 1], [143, 166, 356, 358, 1], [122, 158, 167, 188, 1], [139, 182, 187, 198, 0],
  [182, 186, 199, 209, 0], [181, 199, 238, 238, 0]
];
// fast average: wick top, body top, body bottom, wick bottom, orange flag
const fast = [
  [741, 741, 745, 745], [696, 728, 736, 698], [680, 710, 723, 687], [665, 695, 710, 675], [650, 677, 697, 663],
  [631, 661, 680, 661], [615, 648, 665, 648], [600, 638, 651, 638], [589, 628, 641, 650], [580, 619, 632, 633],
  [570, 609, 623, 634], [561, 602, 612, 634], [553, 597, 606, 632], [545, 594, 600, 629], [551, 596, 601, 631, 1],
  [559, 602, 608, 632, 1], [565, 609, 611, 635, 1], [568, 611, 615, 636, 1], [568, 613, 615, 638], [575, 612, 615, 631],
  [570, 613, 614, 628], [570, 614, 615, 624], [575, 615, 621, 622, 1], [580, 620, 630, 620, 1], [585, 630, 641, 615, 1],
  [590, 638, 646, 620, 1], [594, 644, 646, 611], [600, 643, 647, 610], [605, 639, 645, 608], [600, 633, 641, 604],
  [587, 624, 633, 597], [580, 615, 625, 591], [571, 605, 617, 583], [566, 596, 608, 578], [554, 583, 599, 568],
  [538, 567, 586, 559], [520, 551, 570, 548], [492, 524, 553, 524], [468, 500, 526, 500], [448, 480, 503, 480],
  [429, 462, 484, 462], [410, 445, 465, 445]
];
// slow average: wick top, body top, body bottom, wick bottom
const slow = [
  [700, 745, 758, 795], [698, 736, 748, 784], [687, 723, 737, 773], [675, 710, 726, 761], [663, 697, 713, 746],
  [645, 687, 700, 736], [640, 681, 690, 729], [636, 679, 684, 725], [640, 677, 681, 723], [634, 678, 681, 722],
  [634, 676, 681, 722], [634, 677, 679, 722], [632, 677, 680, 722], [630, 677, 680, 721], [631, 678, 679, 720],
  [632, 679, 680, 720], [635, 680, 682, 719], [636, 681, 682, 719], [638, 679, 684, 724], [631, 674, 681, 721],
  [628, 667, 676, 715], [624, 664, 670, 708], [622, 661, 667, 704], [620, 660, 664, 701], [615, 659, 662, 700],
  [620, 656, 661, 699], [611, 652, 658, 694], [609, 650, 656, 690], [608, 646, 653, 686], [604, 643, 649, 683],
  [597, 633, 643, 678], [591, 629, 636, 671], [583, 620, 630, 663], [578, 614, 623, 654], [568, 605, 616, 645],
  [559, 594, 608, 637], [551, 581, 596, 626], [530, 561, 584, 612], [506, 541, 564, 591], [486, 523, 545, 570],
  [472, 507, 528, 553], [456, 494, 510, 537]
];

let g = '';
// older bars, seen between the panels
g += '<polygon points="273,695 284,702 284,932 273,932" fill="#525252"/>';
g += rect(273, 781, 5, 77, '#2eb050') + rect(273, 859, 5, 6, '#0000ff') + rect(273, 868, 5, 6, '#d2691e');
g += rect(617, 555, 39, 377, '#801212') + rect(617, 555, 26, 1, '#5a6ea0');
g += vline(624, 708, 751, '#d2691e') + rect(619, 751, 11, 8, '#d2691e') + vline(624, 759, 843, '#e00000') + rect(619, 796, 11, 5, '#ff0000');
g += vline(624, 888, 932, '#b0c020') + rect(619.5, 896.5, 10, 5, '#3a2a00', 'stroke="#d0d020"');
g += rect(635, 822, 8, 80, '#ffef10') + vline(640, 754, 850, '#3018a0') + vline(640, 902, 932, '#b0c020') + rect(635, 759, 8, 2, '#d2691e');
g += rect(656, 560, 137, 150, '#525252') + rect(854, 560, 90, 372, '#0a0a3c') + rect(843, 664, 11, 6, '#7cff30');

g += band(0, 7, '#0a0a3c') + band(7, 29, '#525252') + band(29, 41, '#0a0a3c');

candles.forEach(([hi, top, bot, lo, up], i) => {
  const x = X0 + i * STEP;
  const muted = i > 7 && i < 29;
  g += vline(x, hi, lo, i === 7 ? '#3a8068' : muted ? '#3f9a3f' : '#28d028');
  if (up) g += rect(x - 5, top, 11, bot - top, muted ? '#2eb050' : top < upper[i] ? '#7cff00' : '#72fb40');
  else g += rect(x - 4.5, top + 0.5, 10, bot - top - 1, muted ? '#c04c50' : '#f5103c', `stroke="${muted ? '#7c8c50' : '#3cb040'}"`);
});
fast.forEach(([t, a, b, w, orange], i) => {
  const x = X0 + i * STEP, c = orange ? '#d2691e' : '#1e90ff';
  if (w > t) g += vline(x, t, w, orange ? '#c06828' : '#3a8fd8');
  g += rect(x - 5, a, 11, b - a, c);
});
slow.forEach(([t, a, b, w], i) => {
  const x = X0 + i * STEP;
  g += vline(x, t, w, i === 17 ? '#d01818' : i > 7 && i < 29 ? '#1414a8' : '#0000d0') + rect(x - 5, a, 11, b - a, i === 17 ? '#d01818' : '#0000ff');
});

g += `<polyline points="${pts(upper, 0, 41).join(' ')}" fill="none" stroke="#4a86c8"/>`;
g += `<polyline points="${pts(lower, 5, 41).join(' ')}" fill="none" stroke="#b82424"/>`;
g += rect(273, 232, 1250, 1, '#3f86d8') + rect(273, 236, 1250, 1, '#c85038');
g += '<polygon points="1594,109 1606,109 1600,115" fill="#8c98a4"/>';
document.getElementById('chart').innerHTML = g;

document.getElementById('levels').innerHTML =
  '<path d="M272 261.5H1873" stroke="#e8e850" stroke-dasharray="18 6"/>' +
  [401, 644, 783].map(y => rect(273, y, 1600, 1, '#2fc82f')).join('');
```
